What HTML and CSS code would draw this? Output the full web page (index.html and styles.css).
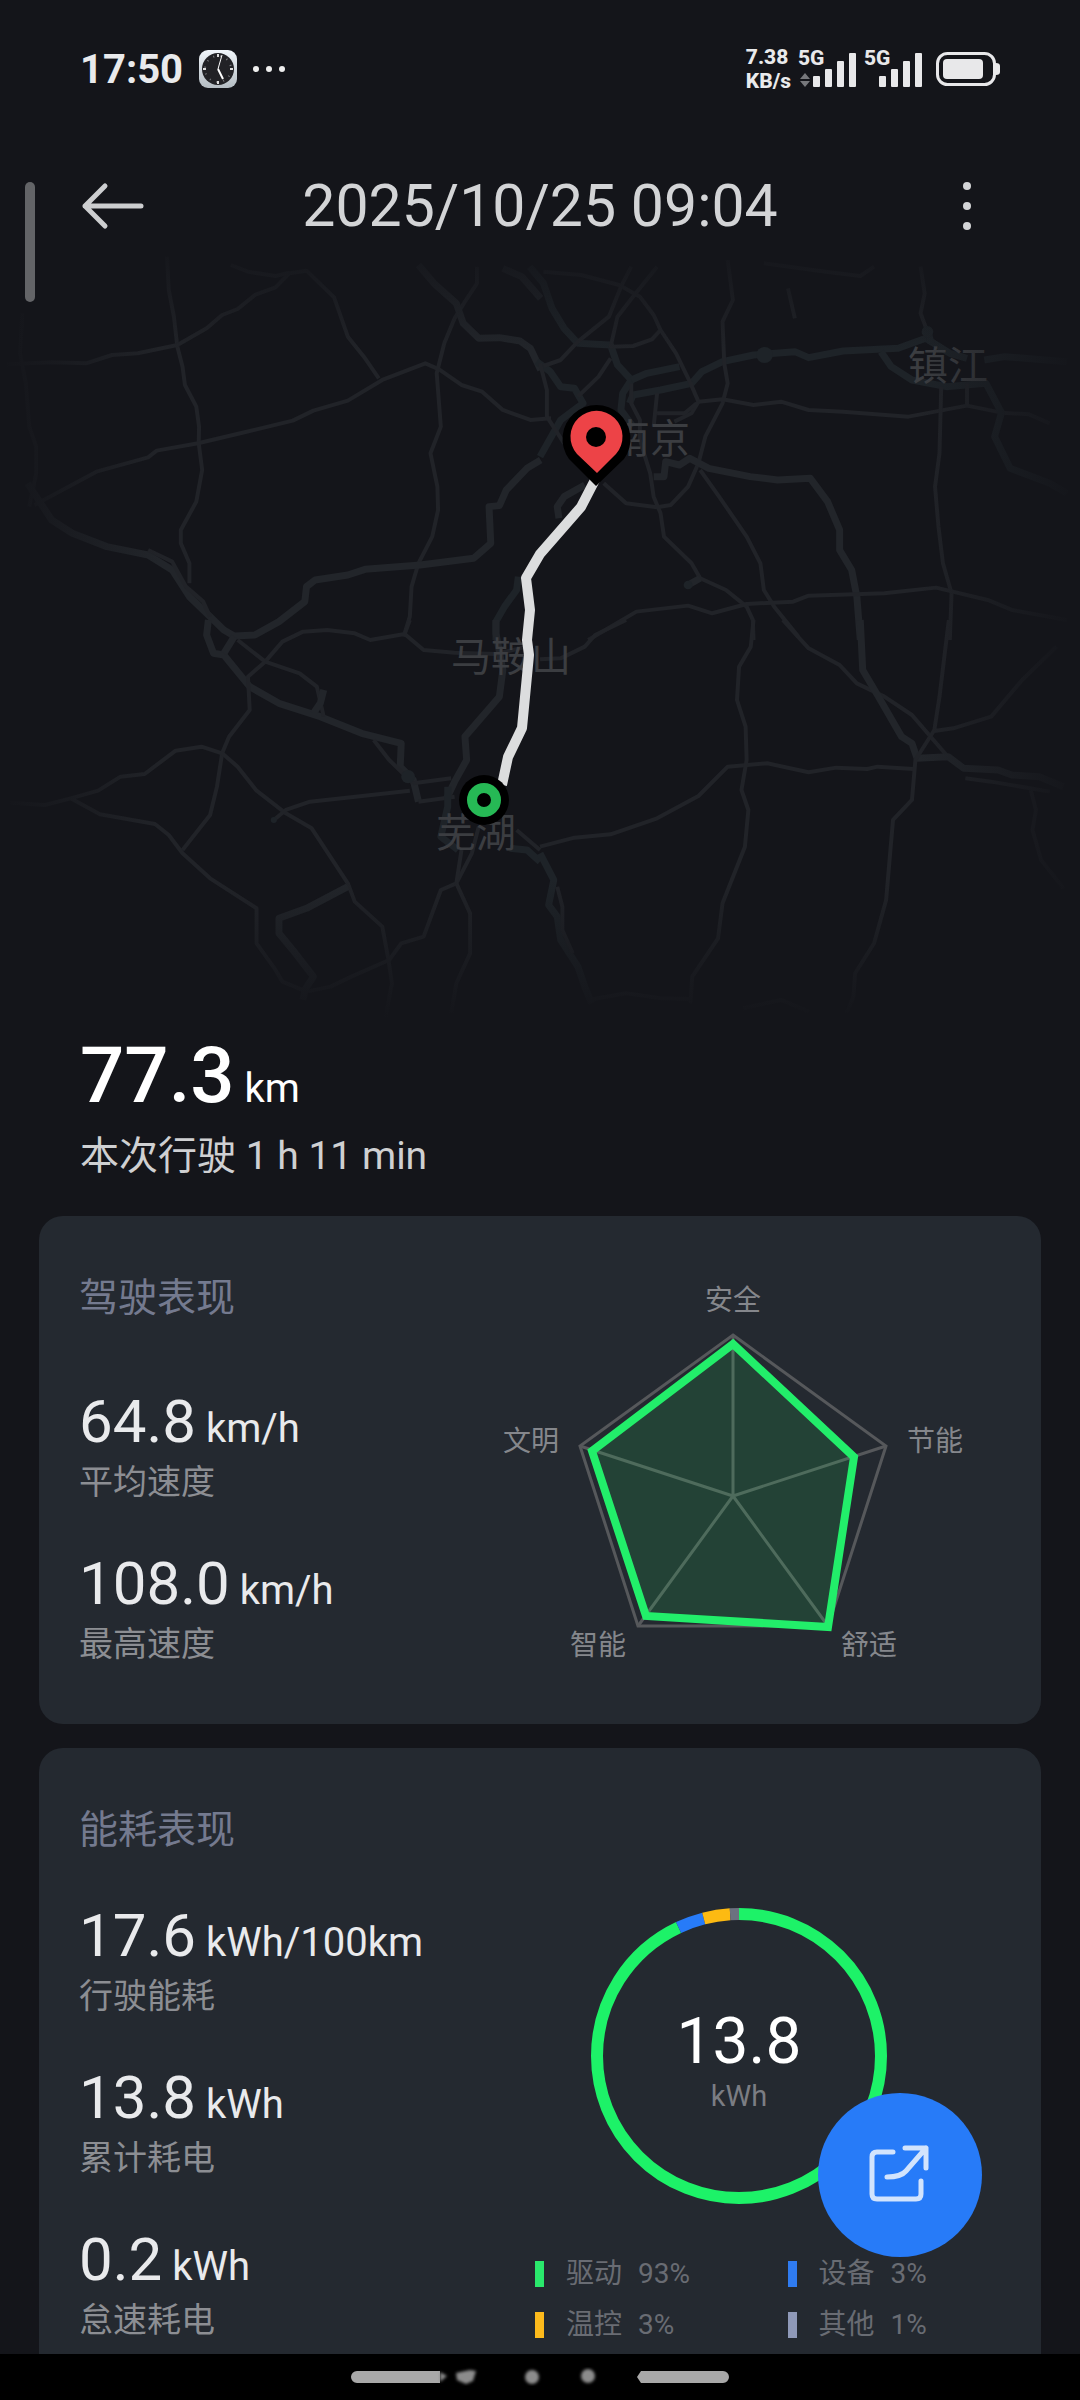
FILE: index.html
```html
<!DOCTYPE html>
<html lang="zh-CN">

<head>
  <meta charset="UTF-8">
  <meta name="viewport" content="width=device-width, initial-scale=1.0">
  <title>行程详情</title>
  <link rel="stylesheet" href="styles.css">
</head>

<body>

  <div class="status-bar">
    <div class="status-left">
      <span class="status-time">17:50</span>
      <svg class="clock-icon" width="38" height="38" viewBox="0 0 38 38">
        <defs>
          <linearGradient id="clockCase" x1="0" y1="0" x2="0" y2="1">
            <stop offset="0" stop-color="#f1f6fb" />
            <stop offset="1" stop-color="#b4bcc2" />
          </linearGradient>
        </defs>
        <rect width="38" height="38" rx="9" fill="url(#clockCase)" />
        <circle cx="19" cy="19" r="16" fill="#222226" />
        <circle cx="19" cy="19" r="13" fill="none" stroke="#77777b" stroke-width="2" stroke-dasharray="1 6" />
        <path d="M19 4v3M19 31v3M4 19h3M31 19h3" stroke="#ddd" stroke-width="2" />
        <path d="M23 5l-4 14" fill="none" stroke="#fff" stroke-width="1" />
        <path d="M19 19l5 10" fill="none" stroke="#fff" stroke-width="2" />
      </svg>
      <svg width="32" height="8" viewBox="0 0 32 8" fill="#eee">
        <circle cx="3" cy="4" r="3" /><circle cx="16" cy="4" r="3" /><circle cx="29" cy="4" r="3" />
      </svg>
    </div>
    <div class="status-right">
      <div class="net-speed"><span>7.38</span><span>KB/s</span></div>
      <svg width="60" height="56" viewBox="0 -8 60 56" fill="#e8e8ea">
        <text class="net-type" x="1" y="16">5G</text>
        <path d="M3 30l5-6 5 6zM3 32h10l-5 6z" fill="#77787c" />
        <rect x="16" y="27" width="7" height="11" rx="1" /><rect x="28" y="20" width="7" height="18" rx="1" />
        <rect x="40" y="12" width="7" height="26" rx="1" /><rect x="52" y="4" width="7" height="34" rx="1" />
      </svg>
      <svg width="60" height="56" viewBox="0 -8 60 56" fill="#e8e8ea">
        <text class="net-type" x="1" y="16">5G</text>
        <rect x="16" y="27" width="7" height="11" rx="1" /><rect x="28" y="20" width="7" height="18" rx="1" />
        <rect x="40" y="12" width="7" height="26" rx="1" /><rect x="52" y="4" width="7" height="34" rx="1" />
      </svg>
      <svg class="battery" width="64" height="34" viewBox="0 0 64 34" fill="#e8e8ea">
        <rect x="1.5" y="1.5" width="57" height="31" rx="10" fill="none" stroke="#e8e8ea" stroke-width="3" />
        <rect x="7" y="7" width="40" height="20" rx="4" />
        <path d="M60 11q4 0 4 3v6q0 3-4 3z" />
      </svg>
    </div>
  </div>

  <header class="app-header">
    <button class="icon-btn" type="button" aria-label="返回">
      <svg width="64" height="48" viewBox="0 0 64 48" fill="none" stroke="#cdced0" stroke-width="5" stroke-linecap="round" stroke-linejoin="round">
        <path d="M61 24H5M25 4L5 24l20 20" />
      </svg>
    </button>
    <h1>2025/10/25 09:04</h1>
    <button class="icon-btn" type="button" aria-label="更多">
      <svg width="64" height="50" viewBox="0 0 64 50" fill="#d4d5d7">
        <circle cx="31" cy="5" r="4" /><circle cx="31" cy="25" r="4" /><circle cx="31" cy="45" r="4" />
      </svg>
    </button>
  </header>

  <main>
    <svg class="map" viewBox="0 0 1080 780">
      <defs>
        <linearGradient id="fade">
          <stop offset="0" stop-color="#14151a" />
          <stop offset="1" stop-color="#14151a" stop-opacity="0" />
        </linearGradient>
        <linearGradient id="fadeDown" x1="0" y1="0" x2="0" y2="1">
          <stop offset="0" stop-color="#14151a" />
          <stop offset="1" stop-color="#14151a" stop-opacity="0" />
        </linearGradient>
      </defs>

      <!-- north west -->
      <g class="road" transform="scale(0.3444 0.3333)">
        <path d="M485 50L490 150 505 230 515 320 530 380 537 435 570 500 578 560 577 610 587 690 570 785 525 870 525 910 550 970 550 1030" />
        <path d="M20 373L150 367 250 370 325 345 400 340 515 315 600 265 645 225 690 207 740 165 800 142 840 100 890 92 970 172 1010 290 1060 355 1100 415" />
        <path d="M670 75L720 95 800 108 840 98" />
        <path d="M65 220L58 340 75 430 85 560 105 620 105 700 85 800M100 795L280 695 430 652 455 632 575 610 710 577 850 542 910 512 1010 482 1110 420 1235 370 1275 388 1340 435 1400 455 1460 510 1540 540 1600 535" />
        <path d="M1385 80L1385 130 1350 185 1320 235 1290 310 1268 400 1280 560 1250 640 1270 740 1272 810 1255 890 1215 970 1195 1040 1190 1130 1172 1190" />
        <path class="major" d="M1215 75L1260 130 1325 190 1345 250 1390 295 1450 293 1510 303 1540 325 1570 390" />
        <path class="major" d="M1460 85L1515 110 1570 175" />
        <path class="major" d="M80 730L150 840 210 880 310 920 430 945 500 990 550 1070 650 1170 680 1188 740 1185 810 1145 885 1085 890 1040 915 1020 1010 1005 1060 988 1220 975 1375 955 1425 910 1420 800 1450 797 1470 750 1530 685 1570 660" />
        <path d="M430 930L500 965 540 1040 590 1085 610 1130" />
        <path class="major water" d="M1505 1010L1500 1050 1465 1100 1440 1145 1440 1200" />
      </g>

      <!-- north east -->
      <g class="road" transform="translate(540 0) scale(0.3444 0.3333)">
        <path class="major water" d="M-30 80L10 130 35 205 70 265 110 310 205 315 225 375 265 420 240 460 235 510 270 560" />
        <path class="major water" d="M-10 365L30 395 60 440 100 445 125 490 60 540 0 650" />
        <path class="major water" d="M265 420L310 400 405 380M260 490L270 465 350 450 440 430 470 395 530 365 620 345 740 335 780 353 880 333 1040 325 1120 295 1190 340 1240 355" />
        <path d="M10 95L120 105 230 135 290 170 330 225 350 270 395 340 435 425 460 485 440 520 390 545" />
        <path d="M265 80L235 140 200 230 110 305 60 360 10 378M340 80L270 170 225 230 205 320 270 318 325 298 350 270M205 355L170 410 110 470M0 370L20 450 20 530 70 610" />
        <path d="M545 60L560 180 530 245 535 370 545 430 530 490 480 590 460 670 430 740 380 795 340 802 250 790 185 730" />
        <path d="M265 430L265 490 290 540 290 600 320 700 330 770 350 820 360 890 440 970 465 1015 540 1050 600 1100 618 1140 620 1200" />
        <path d="M460 485L530 478 620 495 700 485 780 510 880 515 1070 530 1240 497 1340 518 1420 523 1480 550" />
        <path d="M340 460L330 560M340 520L420 520 455 490" />
        <path d="M720 145L740 235M650 70L830 95 930 108 970 80M1105 80L1117 160 1105 220 1125 275" />
        <path class="major water" d="M990 335L1020 380 1080 420 1180 440 1295 430 1340 518 1320 590 1365 685 1480 730 1530 760M1125 265L1135 310M1290 360L1350 350 1530 365" />
        <path d="M1165 440L1160 640 1147 740 1157 860 1170 970 1195 1060 1190 1200M1240 430L1240 500" />
        <path class="major" d="M330 710L360 710 365 665 405 675 435 655 490 685 610 710 690 720 785 715 835 785 870 870 870 930 905 990 920 1070 930 1200" />
        <path d="M465 690L520 770 600 890 640 970 650 1050 680 1100 750 1190" />
        <path d="M140 1200L280 1115 430 1097 500 1120 600 1092 735 1085 780 1067 1000 1060 1150 1043 1300 1080 1370 1110 1530 1140" />
        <path class="major" d="M130 735L70 770 50 800 55 835M465 1015L430 1035" />
        <circle class="area" cx="652" cy="345" r="24" /><circle class="area" cx="1125" cy="275" r="17" /><circle class="area" cx="430" cy="1035" r="13" />
      </g>

      <!-- south west -->
      <g class="road" transform="translate(0 380) scale(0.3444 0.3333)">
        <path class="major" d="M605 0L600 45 620 100 650 105 725 200 810 250 930 290 1050 340 1165 370 1162 440 1200 480 1215 545" />
        <path class="major" d="M650 100L680 50" />
        <path d="M690 60L770 125 720 170 725 270 665 350 645 400 630 500 610 585 530 690M770 125L820 65 880 35 950 30 1030 40 1075 60 1175 42 1190 0M1175 42L1230 90 1320 98 1440 102 1530 80" />
        <path d="M770 125L870 160 920 200 940 290M1085 360L1130 420 1200 490M1200 490L1310 475" />
        <path class="major" d="M940 210L930 250 910 280M1440 0L1440 40 1460 150 1450 230 1350 350 1355 420 1320 485 1295 540" />
        <path d="M30 548L130 555 205 535 285 512 350 470 420 462 510 392 585 380 645 400 690 440 745 512 830 580 905 625 1010 790 1030 845 1110 920 1128 1020 1138 1090 1120 1190" />
        <path d="M205 535L290 583 450 612 490 645 530 700 610 775 745 865 745 970 800 1050 820 1085 890 1115 960 1100 1020 1070 1130 1020 1165 970 1230 950 1280 810 1325 790 1370 700 1390 620" />
        <path d="M795 600L830 570 900 545 1190 512M1215 545L1320 530M1340 690L1325 790 1365 880 1365 1000 1325 1090 1310 1180M1500 630L1568 690" />
        <path class="major" d="M1010 800L890 865 810 895 810 940 850 990 910 1070 885 1110 880 1140" />
        <path class="major water" d="M1300 500L1300 560 1280 650 1330 690M1480 685L1530 690 1568 725" />
        <circle class="area" cx="795" cy="600" r="9" /><circle class="area" cx="1185" cy="470" r="20" />
      </g>

      <!-- south east -->
      <g class="road" transform="translate(540 380) scale(0.3444 0.3333)">
        <path d="M0 118L60 115 130 80 160 45 250 0M0 680L100 653 205 643 340 595 460 528 545 440 660 430 780 457 860 443 950 447 980 440 1085 447" />
        <path d="M620 0L612 80 578 140 572 240 597 320 600 420 585 510 605 570 595 680 530 850 517 955 442 1070 437 1150" />
        <path d="M705 0L780 85 870 135 920 190 1000 230 1080 285 1180 405" />
        <path class="major" d="M930 0L937 150 980 225 1050 350 1080 370 1095 415 1185 410 1230 445 1330 450 1370 465 1450 470 1520 500" />
        <path d="M1187 0L1160 230 1145 330 1090 420 1080 540 1025 600 1005 840 970 970 915 1060 910 1130 890 1180M1145 333L1200 325 1310 290 1400 180 1500 80" />
        <path d="M1235 475L1310 485 1480 515M1425 510L1440 570 1430 630 1455 720 1520 805" />
        <path class="major water" d="M0 700L40 780 25 855 50 890 60 960 110 1040 130 1100 150 1150" />
        <path d="M50 800L65 860 65 930 95 1000M140 1140L250 1120 350 1135 437 1137M590 1165L700 1140 780 1175" />
      </g>

      <g class="city">
        <text x="948" y="140">镇江</text>
        <text x="650" y="213">南京</text>
        <text x="511" y="431">马鞍山</text>
        <text x="476" y="607">芜湖</text>
      </g>

      <rect width="160" height="780" fill="url(#fade)" />
      <rect width="160" height="780" fill="url(#fade)" transform="matrix(-1 0 0 1 1080 0)" />
      <rect width="1080" height="110" fill="url(#fadeDown)" />
      <rect width="1080" height="140" fill="url(#fadeDown)" transform="matrix(1 0 0 -1 0 780)" />

      <path class="route" d="M596 238L581 267 540 314 526 338 530 370 527 400 529 415 522 488 508 517 502 545" />
      <!-- start / end -->
      <circle cx="484" cy="560" r="25" />
      <circle cx="484" cy="560" r="12" fill="none" stroke="#26b955" stroke-width="10" />
      <path d="M596 246L569 219A34 34 0 1 1 624 219Z" />
      <path d="M597 233L577 214A26 26 0 1 1 616 214Z" fill="#ed4347" />
      <circle cx="596" cy="197" r="10" />
    </svg>

    <section class="summary">
      <p class="distance">77.3<span class="unit"> km</span></p>
      <p class="duration">本次行驶 1 h 11 min</p>
    </section>

    <section class="card driving">
      <div class="card-info">
        <h2>驾驶表现</h2>
        <dl class="stats">
          <div class="stat">
            <dd>64.8<span class="unit"> km/h</span></dd>
            <dt>平均速度</dt>
          </div>
          <div class="stat">
            <dd>108.0<span class="unit"> km/h</span></dd>
            <dt>最高速度</dt>
          </div>
        </dl>
      </div>
      <svg class="radar" viewBox="0 0 500 392">
        <polygon class="radar-grid" points="232,61 385,172 327,352 137,352 79,172" />
        <path class="radar-grid" d="M232 222V61M232 222L385 172M232 222L327 352M232 222L137 352M232 222L79 172" />
        <polygon class="radar-value" points="232,70 353,183 327,353 145,342 91,177" />
        <text x="232" y="36">安全</text>
        <text x="434" y="177">节能</text>
        <text x="368" y="381">舒适</text>
        <text x="97" y="381">智能</text>
        <text x="30" y="177">文明</text>
      </svg>
    </section>

    <section class="card energy">
      <div class="card-info">
        <h2>能耗表现</h2>
        <dl class="stats">
          <div class="stat">
            <dd>17.6<span class="unit"> kWh/100km</span></dd>
            <dt>行驶能耗</dt>
          </div>
          <div class="stat">
            <dd>13.8<span class="unit"> kWh</span></dd>
            <dt>累计耗电</dt>
          </div>
          <div class="stat">
            <dd>0.2<span class="unit"> kWh</span></dd>
            <dt>怠速耗电</dt>
          </div>
        </dl>
      </div>
      <div class="chart">
        <div class="ring">
          <svg viewBox="0 0 296 296" fill="none" stroke-width="12">
            <g transform="rotate(-90 148 148)">
              <circle cx="148" cy="148" r="142" pathLength="100" stroke="#1df268" stroke-dasharray="93 7" />
              <circle cx="148" cy="148" r="142" pathLength="100" stroke="#277bf8" stroke-dasharray="3 97" stroke-dashoffset="-93" />
              <circle cx="148" cy="148" r="142" pathLength="100" stroke="#fdba12" stroke-dasharray="3 97" stroke-dashoffset="-96" />
              <circle cx="148" cy="148" r="142" pathLength="100" stroke="#6c7280" stroke-dasharray="1 99" stroke-dashoffset="-99" />
            </g>
          </svg>
          <div class="ring-label">
            <span class="ring-value">13.8</span>
            <span class="ring-unit">kWh</span>
          </div>
        </div>
        <ul class="legend">
          <li class="drive"><span>驱动</span><span>93%</span></li>
          <li class="device"><span>设备</span><span>3%</span></li>
          <li class="climate"><span>温控</span><span>3%</span></li>
          <li class="other"><span>其他</span><span>1%</span></li>
        </ul>
      </div>
    </section>
  </main>

  <div class="scroll-thumb"></div>

  <button class="share-btn" type="button" aria-label="分享">
    <svg width="64" height="64" viewBox="0 0 64 64" fill="none" stroke="#d2e4fd" stroke-width="5" stroke-linecap="round" stroke-linejoin="round">
      <path d="M25 9H9q-5 0-5 5v37q0 5 5 5h39q5 0 5-5V38" />
      <path d="M37 5h21v20M58 5L38 28q-5 6-19 6" />
    </svg>
  </button>

  <div class="nav-bar">
    <svg width="380" height="24" viewBox="0 0 380 24">
      <defs>
        <filter id="smudge"><feGaussianBlur stdDeviation="1.5" /></filter>
      </defs>
      <path d="M7 6H90V18H7a6 6 0 0 1 0-12zM291 6h82a6 6 0 0 1 0 12h-82l-4-6z" fill="#a8a8a8" />
      <g fill="#8c8c8c" filter="url(#smudge)">
        <path d="M90 7l7 4-7 6zM106 8l14-3 6 1-3 10-7 3-9-4z" />
        <circle cx="182" cy="12" r="7" /><circle cx="238" cy="11" r="7" />
      </g>
    </svg>
  </div>

</body>

</html>
```
FILE: styles.css
```css
* {
  box-sizing: border-box;
}

body {
  margin: 0;
  background-color: #14151a;
  color: #e9eaec;
  font-family: Roboto, "Noto Sans CJK SC", sans-serif;
}

h1, h2, p, dl, dd, ul {
  margin: 0;
  padding: 0;
  font-weight: 400;
}

button {
  border: none;
  padding: 0;
  background: none;
  cursor: pointer;
}

svg {
  display: block;
}

/* status bar */
.status-bar {
  display: flex;
  justify-content: space-between;
  align-items: center;
  height: 138px;
  padding: 0 80px;
}

.status-left {
  display: flex;
  align-items: center;
  gap: 16px;
}

.status-time {
  font-size: 40px;
  font-weight: 700;
}

.status-right {
  display: flex;
  align-items: center;
  gap: 6px;
}

.net-speed {
  display: flex;
  flex-direction: column;
  font-size: 21px;
  font-weight: 800;
  line-height: 24px;
}

.net-type {
  font-size: 21px;
  font-weight: 800;
}

.battery {
  margin-left: 7px;
}

/* header */
.app-header {
  display: flex;
  justify-content: space-between;
  align-items: center;
  height: 102px;
  padding: 34px 80px 0;
}

.app-header h1 {
  font-size: 59px;
  line-height: 68px;
  color: #d3d4d6;
}

/* map */
.map {
  width: 100%;
}

.road path {
  fill: none;
  stroke: #212328;
  stroke-width: 4px;
  stroke-linejoin: round;
  vector-effect: non-scaling-stroke;
}

.road .major {
  stroke: #22252a;
  stroke-width: 7px;
}

.road .water {
  stroke: #1e2328;
}

.road .area {
  fill: #1e2328;
}

.city {
  fill: #3b3d41;
  font-size: 40px;
  text-anchor: middle;
}

.route {
  fill: none;
  stroke: #dcddde;
  stroke-width: 10px;
  stroke-linejoin: round;
}

/* summary */
.summary {
  padding: 16px 80px 32px;
}

.distance {
  font-size: 78px;
  font-weight: 500;
  line-height: 80px;
  color: #fff;
}

.unit {
  font-size: 40px;
  font-weight: 400;
  line-height: 40px;
}

.duration {
  margin-top: 12px;
  font-size: 39px;
  line-height: 56px;
  color: #cfd0d2;
}

/* cards */
.card {
  display: grid;
  grid-template-columns: 422fr 500fr;
  margin: 0 39px 24px;
  padding: 58px 40px;
  border-radius: 24px;
  background-color: #242930;
}

.card h2 {
  font-size: 39px;
  line-height: 48px;
  color: #747a8f;
}

.stats {
  display: flex;
  flex-direction: column;
  gap: 50px;
  margin-top: 52px;
}

.driving .stats {
  margin-top: 70px;
}

.energy {
  margin-bottom: 0;
}

.stat dd {
  font-size: 60px;
  line-height: 60px;
  white-space: nowrap;
}

.stat dt {
  margin-top: 8px;
  font-size: 34px;
  line-height: 44px;
  color: #8c8e93;
}

.radar {
  width: 100%;
}

.radar text {
  fill: #85878c;
  font-size: 28px;
  text-anchor: middle;
}

.radar-grid {
  fill: none;
  stroke: #56585b;
  stroke-width: 3px;
}

.radar-value {
  fill: rgba(29, 242, 104, 0.13);
  stroke: #22ee6a;
  stroke-width: 8px;
}

.chart {
  padding: 102px 24px 0 0;
}

.ring {
  display: grid;
  width: 296px;
  margin: 0 auto;
}

.ring svg,
.ring-label {
  grid-area: 1 / 1;
}

.ring-label {
  display: flex;
  flex-direction: column;
  justify-content: center;
  align-items: center;
  padding-top: 16px;
}

.ring-value {
  font-size: 64px;
  line-height: 64px;
  color: #fff;
}

.ring-unit {
  font-size: 29px;
  line-height: 44px;
  color: #7b7d83;
}

.legend {
  display: grid;
  grid-template-columns: 4fr 3fr;
  margin-top: 44px;
  padding-left: 34px;
  list-style: none;
}

.legend li {
  display: flex;
  align-items: center;
  gap: 16px;
  font-size: 28px;
  line-height: 51px;
  color: #696c73;
}

.legend li::before {
  content: "";
  width: 9px;
  height: 26px;
  margin-right: 6px;
  background-color: #8f99b8;
}

.legend .drive::before {
  background-color: #2ae86c;
}

.legend .device::before {
  background-color: #2f7bf0;
}

.legend .climate::before {
  background-color: #fdba1c;
}

/* overlays */
.scroll-thumb {
  position: absolute;
  top: 182px;
  left: 25px;
  width: 10px;
  height: 120px;
  border-radius: 5px;
  background-color: #636467;
}

.share-btn {
  position: fixed;
  right: 98px;
  bottom: 143px;
  display: flex;
  justify-content: center;
  align-items: center;
  width: 164px;
  height: 164px;
  border-radius: 50%;
  background-color: #277bf8;
}

.nav-bar {
  position: fixed;
  left: 0;
  right: 0;
  bottom: 0;
  display: flex;
  justify-content: center;
  height: 46px;
  padding-top: 11px;
  background-color: #000;
}
```
